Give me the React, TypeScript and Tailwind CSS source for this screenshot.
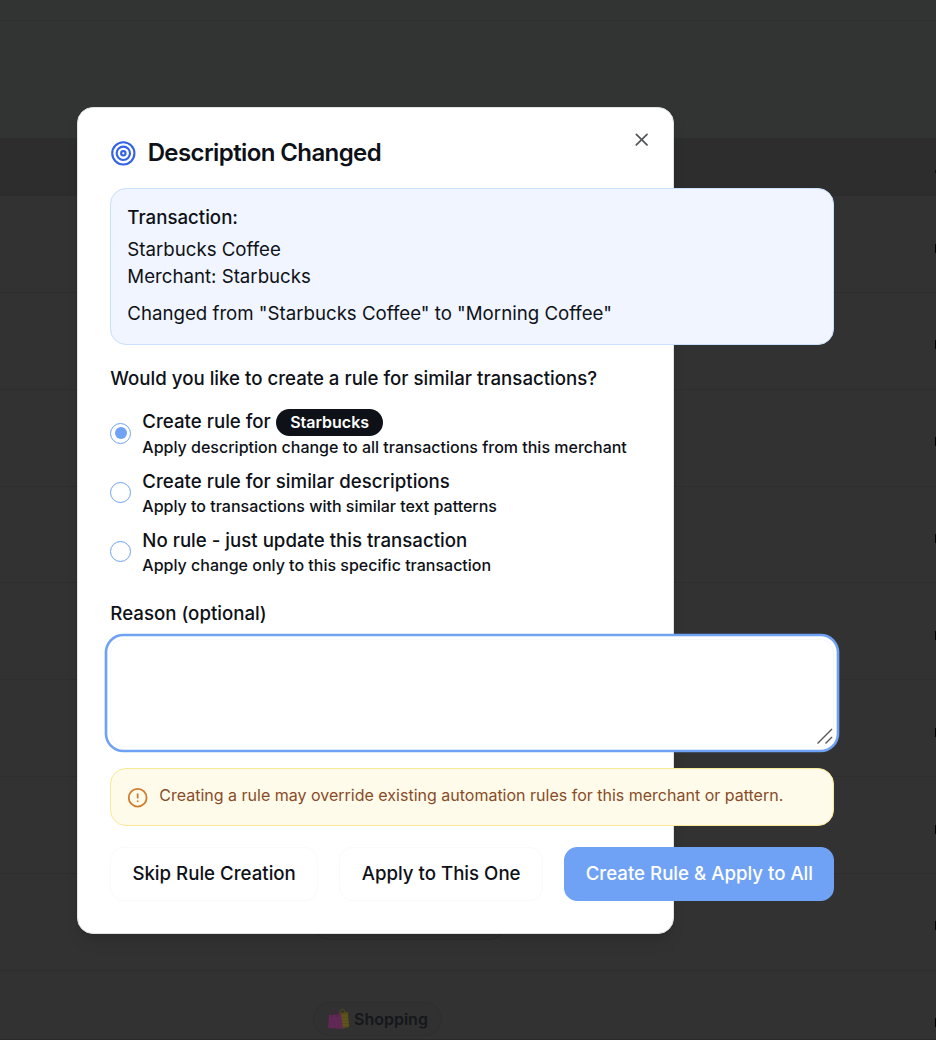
import { CircleAlert, Target, X } from "lucide-react";

const rows = ["r1", "r2", "r3", "r4", "r5", "r6", "r7"];

const options = [
  { title: "Create rule for", badge: "Starbucks", note: "Apply description change to all transactions from this merchant", checked: true },
  { title: "Create rule for similar descriptions", note: "Apply to transactions with similar text patterns", checked: false },
  { title: "No rule - just update this transaction", note: "Apply change only to this specific transaction", checked: false },
];

function Backdrop() {
  return (
    <div className="col-start-1 row-start-1 flex h-[1040px] w-[936px] flex-col overflow-hidden bg-[#323232]">
      <div className="h-[21px] shrink-0 border-b border-[#2e3130] bg-[#313433]" />
      <div className="h-[117px] shrink-0 bg-[#313433]" />
      <div className="flex h-[58px] shrink-0 justify-end bg-[#2d2d2d] pt-8">
        <span className="h-[3px] w-px bg-[#111111]" />
      </div>
      {rows.map((r) => (
        <div key={r} className="flex h-[96.85px] shrink-0 justify-end border-b border-[#2e2e2e] pt-[47.5px]">
          <span className="h-[9px] w-px bg-black" />
        </div>
      ))}
      <div className="flex h-[96.85px] shrink-0 justify-between border-b border-[#2e2e2e] pl-[313px]">
        <div className="mt-[32px] h-[34px] w-[193px] rounded-full border border-[#2d2d2d] bg-[#313131]" />
        <span className="mt-[47.5px] h-[9px] w-px bg-black" />
      </div>
      <div className="flex grow justify-between border-b border-[#2b2a2b] pt-[31.5px] pl-[313px]">
        <div className="flex h-[34px] w-[129px] items-center rounded-full border border-[#2e2e2e] bg-[#313131] pb-px pl-[14px] text-[16px] font-semibold text-[#15171b]">
          <svg viewBox="0 0 21 22" className="mr-[5px] h-[22px] w-[21px] shrink-0">
            <path d="M12 5 20 4 21 19 13 21Z" fill="#574b18" />
            <path d="M13 8h7M13 11h7M13 14h8M13 17h8" stroke="#6a5c20" strokeWidth="1" />
            <path d="M1 7 13 6 15 21 0 20Z" fill="#602854" />
            <path d="M4 9V5c0-4 5-4 5 0v4" fill="none" stroke="#4e2145" strokeWidth="1" />
            <path d="M12 5c0-5 5-5 5 0" fill="none" stroke="#574b18" strokeWidth="1" />
          </svg>
          Shopping
        </div>
        <span className="mt-[16px] h-[9px] w-px bg-black" />
      </div>
    </div>
  );
}

export default function App() {
  return (
    <div className="grid h-[1040px] w-[936px] overflow-hidden font-['Inter',sans-serif] text-[#0e1117]">
      <Backdrop />
      <div className="relative col-start-1 row-start-1 mt-[106.67px] ml-[77.33px] flex h-[827px] w-[597px] flex-col rounded-2xl border border-[#dfe4e3] bg-white px-8 pt-8 shadow-lg">
        <button aria-label="Close" className="absolute top-[21px] right-[20.67px] text-[#54585b]">
          <X size={21.33} strokeWidth={2} />
        </button>
        <div className="flex h-[27px] shrink-0 items-center gap-[10.67px]">
          <Target size={26.67} strokeWidth={1.9} className="shrink-0 text-[#3462e6]" />
          <h2 className="text-[24px] leading-6 font-semibold tracking-[-0.6px] whitespace-nowrap">Description Changed</h2>
        </div>

        <div className="mt-[21.5px] h-[157px] w-[724px] shrink-0 rounded-2xl border border-[#c9dffc] bg-[#f0f5ff] px-4 pt-4 text-[18.67px] leading-[26.67px] whitespace-nowrap">
          <p className="font-medium">Transaction:</p>
          <p className="mt-[5.33px]">Starbucks Coffee</p>
          <p>Merchant: Starbucks</p>
          <p className="mt-[10.67px]">Changed from "Starbucks Coffee" to "Morning Coffee"</p>
        </div>

        <p className="mt-[20px] h-[27px] shrink-0 text-[18.67px] leading-[27px] font-medium whitespace-nowrap">Would you like to create a rule for similar transactions?</p>

        <div className="mt-[16.5px] flex shrink-0 flex-col gap-[10.67px]">
          {options.map((o) => (
            <label key={o.title} className="flex items-center gap-[11px]">
              <span className="flex size-[21px] shrink-0 items-center justify-center rounded-full border border-[#6fa2f5]">
                {o.checked && <span className="size-[12px] rounded-full bg-[#6fa2f5]" />}
              </span>
              <span className="flex flex-col font-medium whitespace-nowrap">
                <span className="flex items-center text-[18.67px] leading-[26.67px]">
                  {o.title}
                  {o.badge && <span className="ml-[5px] flex h-[27.5px] w-[107.5px] items-center justify-center rounded-full bg-[#0e1117] text-[16px] font-semibold text-white">{o.badge}</span>}
                </span>
                <span className="pt-px text-[16px] leading-[20.75px]">{o.note}</span>
              </span>
            </label>
          ))}
        </div>

        <p className="mt-[24.2px] h-[27px] shrink-0 text-[18.67px] leading-[27px] font-medium">Reason (optional)</p>
        <div className="relative mt-[12px] h-[107.5px] w-[724px] shrink-0">
          <textarea aria-label="Reason" className="block h-full w-full resize-none rounded-[13.33px] border border-[#f7f8f9] bg-white shadow-[0_0_0_2.67px_#ffffff,0_0_0_5.33px_#6fa2f5] outline-none" />
          <svg viewBox="0 0 16 16" className="absolute right-[1.5px] bottom-[2.5px] size-4" fill="none" stroke="#555555" strokeWidth="1.4">
            <path d="M.5 15.5 15 1M8.5 15.5 15 9" />
          </svg>
        </div>

        <div className="mt-[21.3px] flex h-[58px] w-[724px] shrink-0 rounded-2xl border border-[#f9e896] bg-[#fffbea] px-4 pt-4 text-[#894b28]">
          <CircleAlert size={21.33} className="mt-[2.4px] shrink-0 text-[#cf7b2c]" />
          <p className="ml-[10.67px] text-[16px] leading-[21.33px] whitespace-nowrap">Creating a rule may override existing automation rules for this merchant or pattern.</p>
        </div>

        <div className="mt-[21.3px] flex w-[724px] shrink-0 gap-[21.33px] text-[18.67px] font-medium whitespace-nowrap">
          <button className="h-[53.5px] w-[207.6px] shrink-0 rounded-[13.33px] border border-[#f9fafa]">Skip Rule Creation</button>
          <button className="h-[53.5px] w-[203.8px] shrink-0 rounded-[13.33px] border border-[#f9fafa]">Apply to This One</button>
          <button className="h-[53.5px] grow rounded-[13.33px] bg-[#6fa2f5] text-white">Create Rule &amp; Apply to All</button>
        </div>
      </div>
    </div>
  );
}
